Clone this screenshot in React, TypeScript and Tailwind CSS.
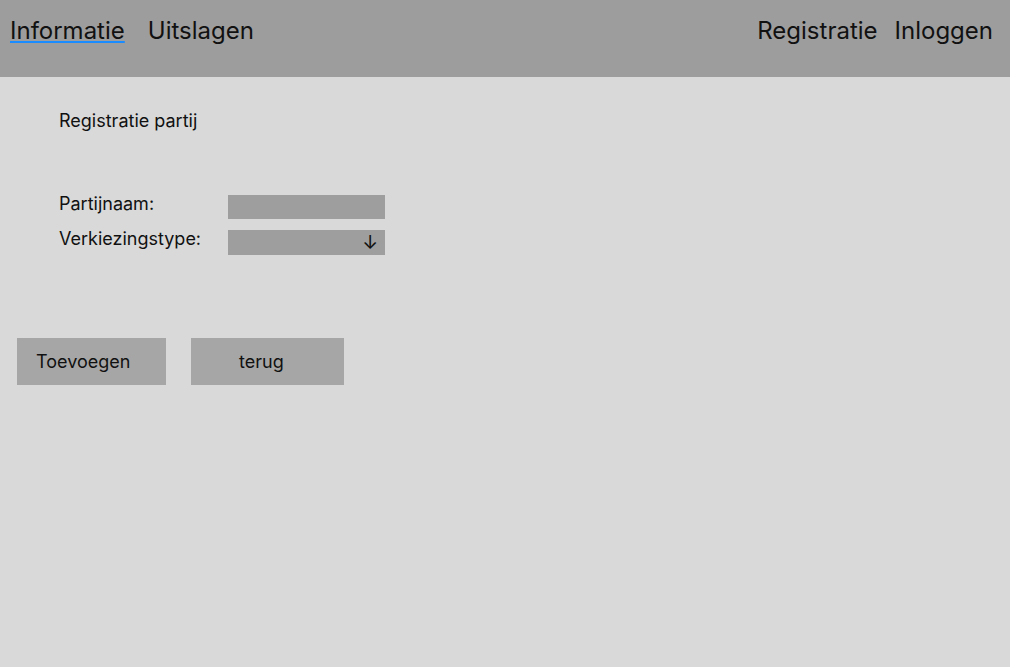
import { useState } from "react";

const font = { fontFamily: "Inter, 'Noto Sans', sans-serif" };

export default function App() {
  const [naam, setNaam] = useState("");

  return (
    <div
      className="min-h-screen bg-[#d9d9d9] text-[#111111]"
      style={font}
    >
      {/* Header */}
      <header className="h-[77px] bg-[#9d9d9d] flex items-start justify-between pt-[16px] pl-[10px] pr-[17px] text-[24px] leading-[29px]">
        <nav className="flex gap-[23px]">
          <a className="underline decoration-[#1a8cff] decoration-[1.5px] underline-offset-[2px]">
            Informatie
          </a>
          <a>Uitslagen</a>
        </nav>
        <nav className="flex gap-[17px]">
          <a>Registratie</a>
          <a>Inloggen</a>
        </nav>
      </header>

      {/* Form */}
      <main className="pt-[33px]">
        <h1 className="pl-[59px] text-[18px] leading-[22px]">
          Registratie partij
        </h1>

        <div className="mt-[63px] pl-[59px] flex flex-col gap-[11px] text-[18px] leading-[18px]">
          <div className="flex items-start">
            <label className="w-[169px]">Partijnaam:</label>
            <input
              value={naam}
              onChange={(e) => setNaam(e.target.value)}
              className="w-[157px] h-6 bg-[#9e9e9e] outline-none px-2 text-sm"
            />
          </div>
          <div className="flex items-start">
            <label className="w-[169px]">Verkiezingstype:</label>
            <div className="w-[157px] h-[25px] bg-[#9e9e9e] flex items-center justify-end pr-[7px] text-[19px] leading-none">
              ↓
            </div>
          </div>
        </div>

        <div className="mt-[83px] pl-[17px] flex gap-[25px] text-[18px]">
          <button className="w-[149px] h-[47px] bg-[#a6a6a6] text-left pl-[19px]">
            Toevoegen
          </button>
          <button className="w-[153px] h-[47px] bg-[#a6a6a6] text-left pl-[48px]">
            terug
          </button>
        </div>
      </main>
    </div>
  );
}
